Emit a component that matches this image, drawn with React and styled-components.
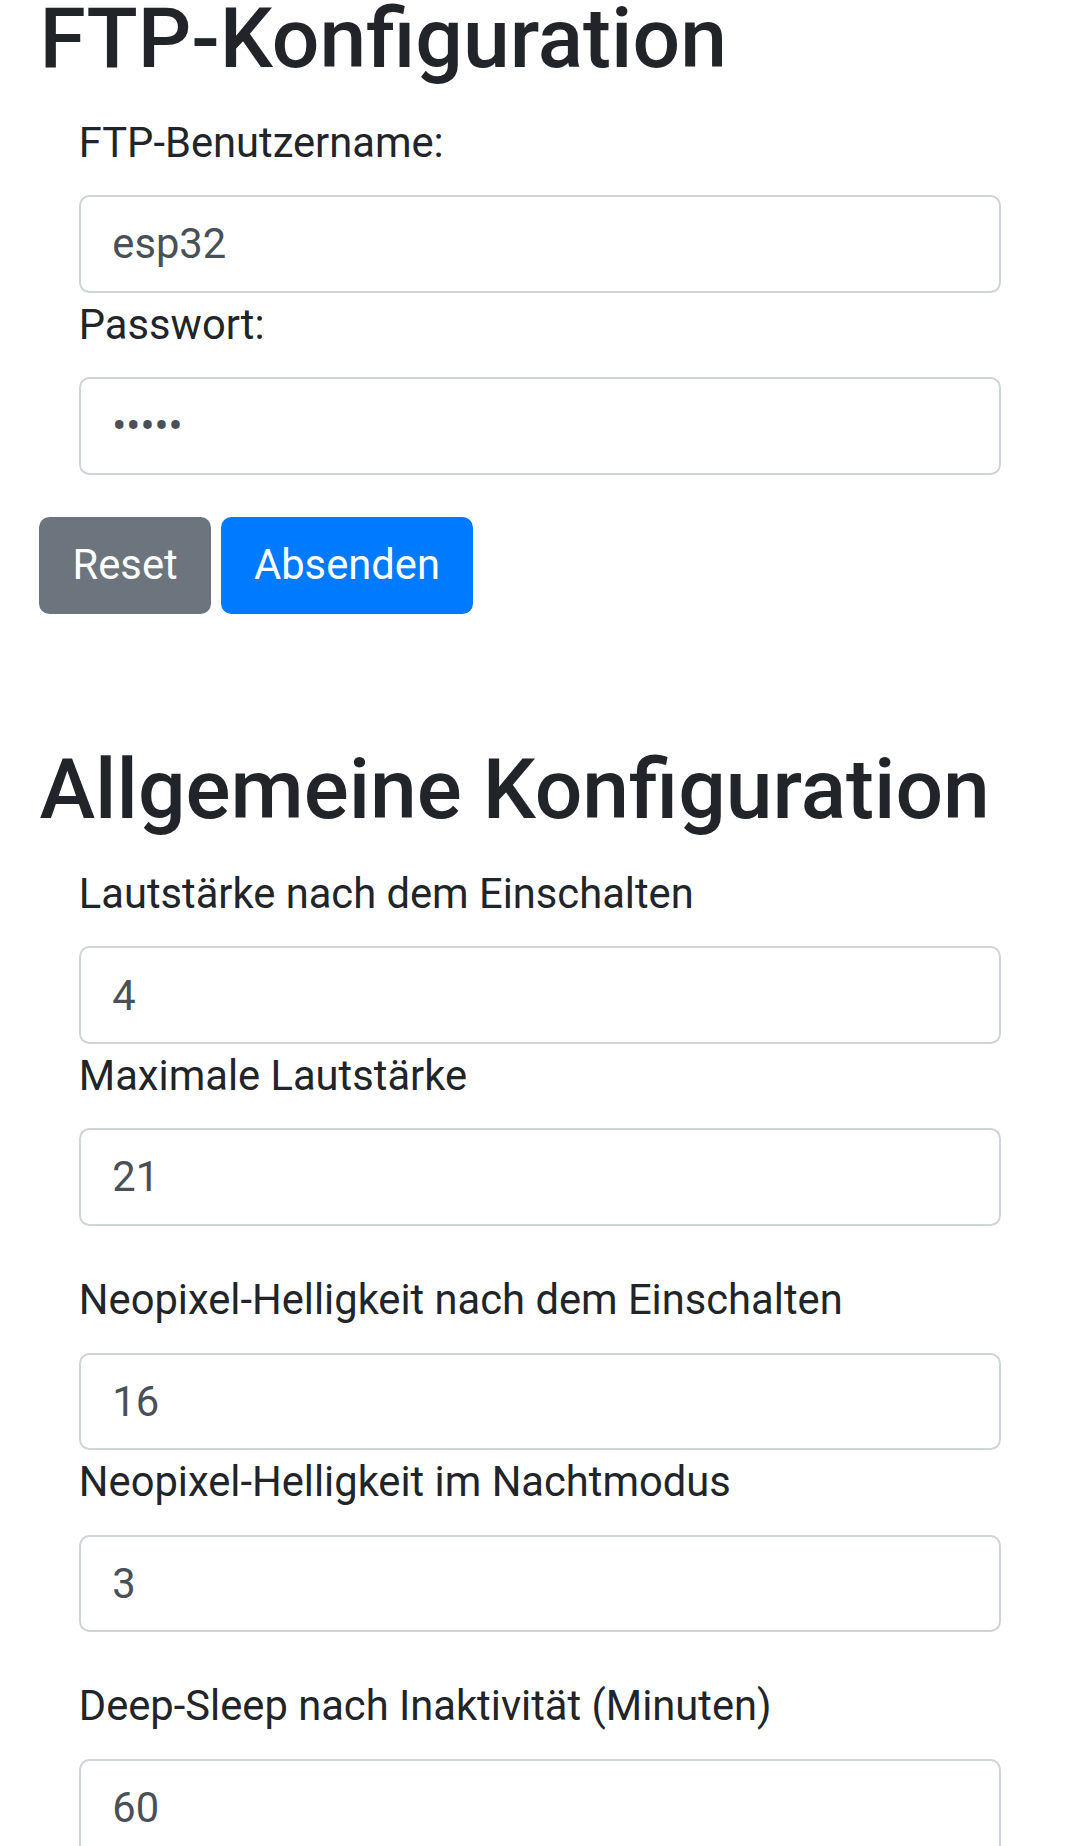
import React from 'react';
import styled, { createGlobalStyle } from 'styled-components';

const GlobalStyle = createGlobalStyle`
  html, body {
    margin: 0;
    padding: 0;
    background: #fff;
  }
  body {
    font-family: Roboto, "Noto Sans", "Liberation Sans", sans-serif;
    color: #212529;
    font-size: 41.7px;
    line-height: 1.5;
  }
  *, *::before, *::after {
    box-sizing: border-box;
  }
`;

const Page = styled.div`
  padding: 0 39.4px;
  margin-top: -11px;
`;

const Section = styled.section`
  margin-top: ${(p) => p.$gap || 0}px;
`;

const Title = styled.h2`
  margin: 0 0 21px;
  font-size: 84px;
  font-weight: 500;
  line-height: 1.2;
  color: #212529;
`;

const FieldGroup = styled.div`
  width: 922.3px;
  margin: 0 0 42.5px 39.4px;
`;

const Label = styled.label`
  display: inline-block;
  margin-bottom: 21.5px;
  font-size: 41.7px;
  line-height: 63px;
`;

const Input = styled.input`
  display: block;
  width: 100%;
  height: 97.4px;
  padding: 0 31.5px;
  font-family: inherit;
  font-size: 41.7px;
  line-height: 1.5;
  color: #495057;
  background: #fff;
  border: 2.5px solid #ced4da;
  border-radius: 10.5px;
  outline: none;
`;

const ButtonRow = styled.div`
  display: flex;
  gap: 10px;
`;

const Button = styled.button`
  height: 97px;
  padding: 0 31.2px;
  font-family: inherit;
  font-size: 41.7px;
  line-height: 1.5;
  color: #fff;
  background: ${(p) => (p.$primary ? '#007bff' : '#6c757d')};
  border: 2.5px solid ${(p) => (p.$primary ? '#007bff' : '#6c757d')};
  border-radius: 10.5px;
`;

const Field = ({ label, value, type = 'text' }) => (
  <>
    <Label>{label}</Label>
    <Input type={type} defaultValue={value} readOnly />
  </>
);

const App = () => {
  return (
    <Page>
      <GlobalStyle />
      <Section>
        <Title>FTP-Konfiguration</Title>
        <FieldGroup>
          <Field label="FTP-Benutzername:" value="esp32" />
          <Field label="Passwort:" value="12345" type="password" />
        </FieldGroup>
        <ButtonRow>
          <Button type="reset">Reset</Button>
          <Button type="submit" $primary>
            Absenden
          </Button>
        </ButtonRow>
      </Section>
      <Section $gap={126}>
        <Title>Allgemeine Konfiguration</Title>
        <FieldGroup>
          <Field label="Lautstärke nach dem Einschalten" value="4" />
          <Field label="Maximale Lautstärke" value="21" />
        </FieldGroup>
        <FieldGroup>
          <Field label="Neopixel-Helligkeit nach dem Einschalten" value="16" />
          <Field label="Neopixel-Helligkeit im Nachtmodus" value="3" />
        </FieldGroup>
        <FieldGroup>
          <Field label="Deep-Sleep nach Inaktivität (Minuten)" value="60" />
        </FieldGroup>
      </Section>
    </Page>
  );
};

export default App;
